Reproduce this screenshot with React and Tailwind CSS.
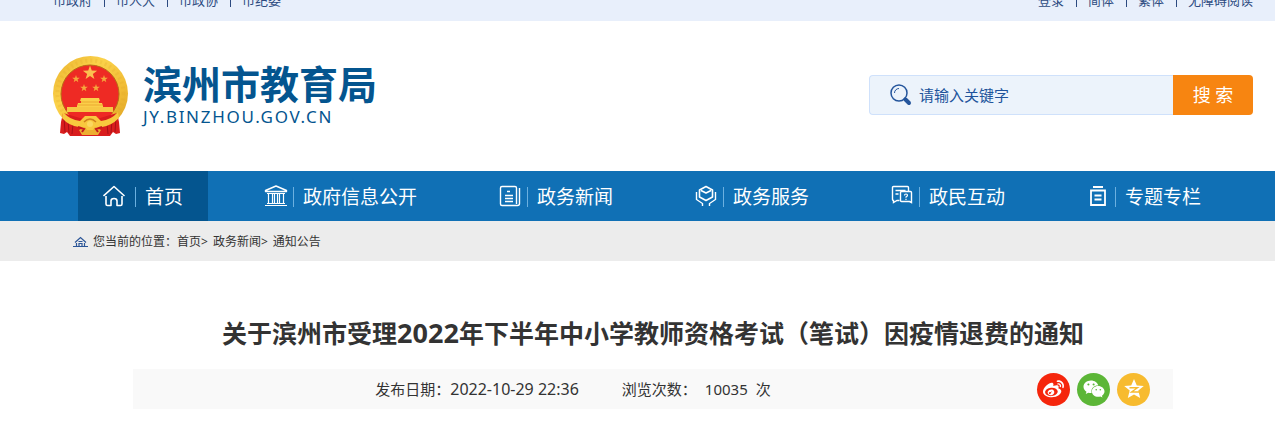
import React from 'react';
import { FaWeibo, FaWeixin } from 'react-icons/fa';

const siteLinks = ['市政府', '市人大', '市政协', '市纪委'];
const toolLinks = ['登录', '简体', '繁体', '无障碍阅读'];

const Star = ({ x, y, r, fill }) => {
  const points = Array.from({ length: 10 }, (_, i) => {
    const radius = i % 2 ? r * 0.4 : r;
    const angle = (Math.PI / 5) * i - Math.PI / 2;
    return `${x + radius * Math.cos(angle)},${y + radius * Math.sin(angle)}`;
  }).join(' ');
  return <polygon points={points} fill={fill} />;
};

const Emblem = () => (
  <svg width="76" height="80" viewBox="0 0 76 80" className="shrink-0" aria-hidden="true">
    <defs>
      <linearGradient id="gold" x1="0" y1="0" x2="1" y2="1">
        <stop offset="0" stopColor="#e9b02c" />
        <stop offset="0.35" stopColor="#fbd24a" />
        <stop offset="0.7" stopColor="#f0bb35" />
        <stop offset="1" stopColor="#dba021" />
      </linearGradient>
    </defs>
    <circle cx="37.5" cy="37.5" r="37.5" fill="url(#gold)" />
    <circle cx="37.5" cy="37.5" r="33" fill="none" stroke="#dc9f25" strokeWidth="4" strokeDasharray="2 3" opacity="0.2" />
    <circle cx="37" cy="38" r="29" fill="#ee2a24" stroke="#b96a16" strokeWidth="1" />
    <Star x={37} y={17} r={7.5} fill="#fbc050" />
    <Star x={23} y={23} r={4} fill="#f5a83c" />
    <Star x={51} y={23} r={4} fill="#f5a83c" />
    <Star x={31} y={32} r={4} fill="#f5a83c" />
    <Star x={43} y={32} r={4} fill="#f5a83c" />
    {/* Gate */}
    <path d="M28 42h18l1 3h-1v2h3l1 3v1H24v-1l1-3h3v-2h-1z" fill="#fbcf49" />
    <path d="M28 46h18M25 49h25" stroke="#e59a26" strokeWidth="0.7" />
    <path d="M14 51h46v5H14z" fill="#f7c744" />
    <path d="M14 57h46l-7 6-6-1-6-3h-8l-6 3-6 1z" fill="#ee2a24" />
    {/* Ribbon */}
    <path d="M10 57l-2 9-1 11 4 1 3-2 3 4h40l3-4 3 2 4-1-1-11-2-9-27 8z" fill="#d91d1d" />
    <path d="M11 61l1 15M15 64l1 13M20 68l-1 10M63 61l-1 15M59 64l-1 13M54 68l1 10" stroke="#a80f16" strokeWidth="1" fill="none" />
    <path d="M10 56q7 8 17 9l5-5h11l5 5q10-1 17-9l1 6q-8 8-17 9l-6 3H32l-6-3q-10-1-17-9z" fill="#f8c83e" />
    <path d="M31 66q6-6 12 0" stroke="#cf7f1c" strokeWidth="1.5" fill="none" />
    <path d="M26 74l6-3 2 3h6l2-3 6 3-3 5H29z" fill="#ecae2f" />
    <circle cx="37" cy="68" r="3" fill="#fbd85f" />
    <path d="M25 71l6 2-2 3M49 71l-6 2 2 3" stroke="#c61a1c" strokeWidth="2" fill="none" />
  </svg>
);

const NavIcon = ({ children }) => (
  <svg width="32" height="24" viewBox="0 0 32 24" fill="none" stroke="white" strokeWidth="1.6" className="shrink-0" aria-hidden="true">
    {children}
  </svg>
);

const navItems = [
  {
    label: '首页',
    active: true,
    icon: <path d="M.5 12L11 2.500 21.500 12M3 12v8q0 1.500 1.500 1.500H8V17q0-2.500 3-2.500t3 2.500v4.500h3.500q1.500 0 1.500-1.500v-8" strokeLinejoin="round" />,
  },
  {
    label: '政府信息公开',
    icon: (
      <>
        <path d="M4.500 7.500v-1L15 2l10.500 4.500v1z" strokeLinejoin="round" strokeWidth="1.4" />
        <path d="M6 9.500h18M6 19.500h18M4 21.500h22M7.500 10v9M11.500 10v9M13.500 10v9M16.500 10v9M18.500 10v9M22.500 10v9" strokeWidth="1.2" />
      </>
    ),
  },
  {
    label: '政务新闻',
    icon: (
      <>
        <path d="M21.500 20V4q0-1.500-1.500-1.500H7Q5.500 2.500 5.500 4v16q0 1.500 1.500 1.500h15.500q2 0 2-2V4" strokeWidth="1.4" />
        <path d="M12 7.500h3M10 11.500h8M10 14.500h8M10 17.500h8" strokeWidth="1.4" />
      </>
    ),
  },
  {
    label: '政务服务',
    icon: (
      <>
        <path d="M15 2.500l6.500 3.500v7L15 16.500 8.500 13V6zM10 6.500l5 2.500 5-2.500" strokeLinejoin="round" />
        <path d="M5.500 8v7.500l6 4v2.500M24.500 8v7.500l-6 4v2.500" strokeWidth="1.4" />
      </>
    ),
  },
  {
    label: '政民互动',
    icon: (
      <>
        <path d="M12.500 16.500H10l-3.500 2v-2q-1 0-1-1v-12q0-1 1-1h14q1 0 1 1V7M8.500 6.500h10M8.500 10h3" strokeWidth="1.4" />
        <path d="M14.500 7.500h9q1 0 1 1v10l-2-1h-8q-1 0-1-1v-8q0-1 1-1z" fill="#1070b5" strokeWidth="1.4" />
        <path d="M17.500 11.500q0-1.500 1.500-1.500t1.500 1.300q0 1-1.500 1.700v.8M19 14.800v1.200" strokeWidth="1.2" />
      </>
    ),
  },
  {
    label: '专题专栏',
    icon: (
      <>
        <path d="M10 3h10" strokeWidth="2" />
        <path d="M8 6.500h14v14.500H8zM11.500 11.500h7M11.500 15.500h7" strokeWidth="1.8" />
      </>
    ),
  },
];

const LinkRow = ({ links }) => (
  <div className="flex h-10 items-center">
    {links.map((link, index) => (
      <React.Fragment key={link}>
        {index > 0 && <span className="ml-3 mr-[11px] h-3 w-px bg-[#2c4a80]" />}
        <a href="#">{link}</a>
      </React.Fragment>
    ))}
  </div>
);

const App = () => {
  return (
    <div className="bg-white font-['Noto_Sans','Noto_Sans_CJK_SC',sans-serif] text-[#333333]">
      {/* Top links */}
      <div className="flex h-[21px] items-end justify-between overflow-hidden bg-[#e8effb] pl-[53px] pr-[22px] text-[13px] text-[#2c4a80]">
        <LinkRow links={siteLinks} />
        <LinkRow links={toolLinks} />
      </div>

      {/* Header */}
      <header className="flex h-[150px] items-center justify-between pl-[53px] pr-[22px]">
        <a href="#" className="flex items-center gap-[14px] text-[#04558f]">
          <Emblem />
          <div>
            <div className="text-[39px] font-bold leading-[42px]">滨州市教育局</div>
            <div className="text-[17px] leading-6 tracking-widest">JY.BINZHOU.GOV.CN</div>
          </div>
        </a>

        <form className="mb-0.5 flex h-10 w-96" onSubmit={(e) => e.preventDefault()}>
          <label className="flex min-w-0 flex-1 items-center gap-[7px] rounded-l border border-r-0 border-[#cfe1fb] bg-[#ecf3fb] pl-5">
            <svg width="22" height="22" viewBox="0 0 22 22" fill="none" className="shrink-0" aria-hidden="true">
              <circle cx="9" cy="9" r="8" stroke="#24559c" strokeWidth="1.500" />
              <path d="M4.500 9A4.500 4.500 0 0 1 9 4.500" stroke="#24559c" />
              <path d="M14 14l2 2" stroke="#24559c" strokeWidth="2" />
              <path d="M15.500 15.500l3.500 3.500" stroke="#24559c" strokeWidth="4" strokeLinecap="round" />
            </svg>
            <input
              type="text"
              aria-label="请输入关键字"
              placeholder="请输入关键字"
              className="h-full min-w-0 flex-1 bg-transparent text-[15px] text-[#21549b] outline-none placeholder:text-[#21549b]"
            />
          </label>
          <button type="submit" className="w-20 rounded-r bg-[#f78511] text-lg text-white">
            搜 索
          </button>
        </form>
      </header>

      {/* Main nav */}
      <nav className="flex h-[50px] gap-7 bg-[#1070b5] pl-[78px] text-[19px] text-white">
        {navItems.map((item) => (
          <a
            key={item.label}
            href="#"
            className={`flex shrink-0 items-center px-[25px] ${item.active ? 'bg-[#04558f]' : ''}`}
          >
            <NavIcon>{item.icon}</NavIcon>
            <span className="mt-0.5 border-l border-[#6bb0e0] pl-[9px] leading-5">{item.label}</span>
          </a>
        ))}
      </nav>

      {/* Breadcrumb */}
      <div className="flex h-10 items-center bg-[#ececec] pl-[73px] pt-0.5 text-xs">
        <svg width="15" height="12" viewBox="0 0 15 12" fill="none" stroke="#2b5597" strokeWidth="1.2" className="mr-[5px]" aria-hidden="true">
          <path d="M2 6.500L7.500 1.500 13 6.500M0 10.500h15M3.500 7v3.500M11.500 7v3.500M6 10V7.500h3V10M5.500 5.500h4" />
        </svg>
        <span>您当前的位置：</span>
        <a href="#">首页</a>
        <span className="mr-[5px]">&gt;</span>
        <a href="#">政务新闻</a>
        <span className="mr-[5px]">&gt;</span>
        <a href="#">通知公告</a>
      </div>

      {/* Article */}
      <main className="pl-[133px] pr-[102px] pt-[52px]">
        <h1 className="text-center text-[25px] font-bold leading-10">
          关于滨州市受理<span className="text-[27px]">2022</span>年下半年中小学教师资格考试（笔试）因疫情退费的通知
        </h1>
        <div className="mt-4 flex h-10 items-center bg-[#f9f9f9] text-[15px]">
          <div className="flex flex-1 items-center justify-center gap-[43px]">
            <span>
              发布日期：<time className="text-base">2022-10-29 22:36</time>
            </span>
            <span className="flex items-center gap-2">
              浏览次数：<span>10035</span>
              <span>次</span>
            </span>
          </div>
          <div className="flex w-40 justify-end gap-[7px] pr-[23px] text-white">
            <button aria-label="微博" className="flex size-[33px] items-center justify-center rounded-full bg-[#f5260c]">
              <FaWeibo size={21} />
            </button>
            <button aria-label="微信" className="flex size-[33px] items-center justify-center rounded-full bg-[#5cb637]">
              <FaWeixin size={22} />
            </button>
            <button aria-label="QQ空间" className="flex size-[33px] items-center justify-center rounded-full bg-[#f7bb2f]">
              <svg width="20" height="20" viewBox="0 0 20 20" aria-hidden="true">
                <path d="M10 0l2.800 6.500 7 .5-5.500 4.600 1.900 7.400L10 15.500 3.800 19l1.900-7.400L.2 7l7-.5z" fill="white" />
                <path d="M5.500 8.700h8L7.500 13h7.500" stroke="#f7bb2f" strokeWidth="1.4" fill="none" />
              </svg>
            </button>
          </div>
        </div>
      </main>
    </div>
  );
};

export default App;
